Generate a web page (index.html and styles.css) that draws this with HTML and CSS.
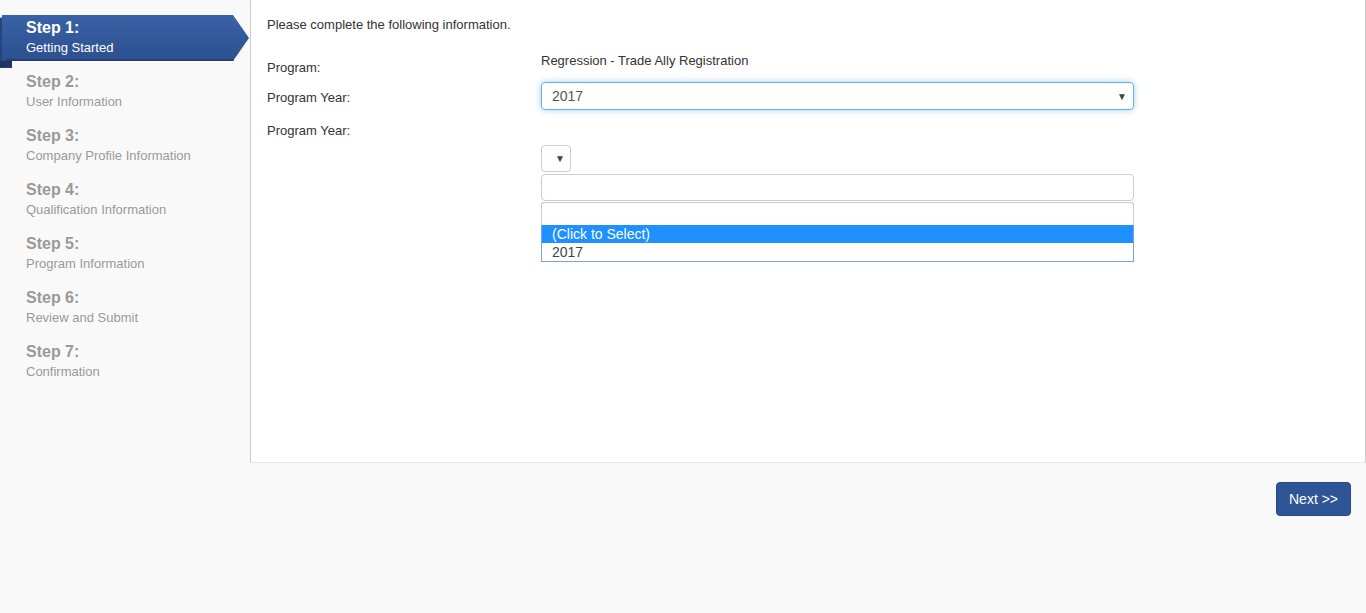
FILE: index.html
```html
<!DOCTYPE html>
<html>
<head>
<meta charset="utf-8">
<link rel="stylesheet" href="styles.css">
</head>
<body>
<div class="wrap">
  <div class="top">
    <aside class="steps">
      <div class="step active">
        <svg class="ribbon" width="250" height="56" viewBox="0 0 250 56">
          <defs>
            <linearGradient id="rg" x1="0" y1="0" x2="0" y2="1">
              <stop offset="0" stop-color="#3a62a6"/>
              <stop offset="1" stop-color="#2c5090"/>
            </linearGradient>
          </defs>
          <path d="M0 3 Q6 0 12 5 L12 53 L0 53 Z" fill="#254580"/>
          <path d="M0 46 L12 46 L12 53 Q6 50 0 53 Z" fill="#1b3566"/>
          <path d="M2 0 L233 0 L249 23 L233 46 L6 46 Q2 46 2 40 Z" fill="url(#rg)"/>
          <path d="M6 44 L233 44 L234 46 L6 46 Z" fill="#243f73"/>
        </svg>
        <div class="step-title">Step 1:</div>
        <div class="step-sub">Getting Started</div>
      </div>
      <div class="step"><div class="step-title">Step 2:</div><div class="step-sub">User Information</div></div>
      <div class="step"><div class="step-title">Step 3:</div><div class="step-sub">Company Profile Information</div></div>
      <div class="step"><div class="step-title">Step 4:</div><div class="step-sub">Qualification Information</div></div>
      <div class="step"><div class="step-title">Step 5:</div><div class="step-sub">Program Information</div></div>
      <div class="step"><div class="step-title">Step 6:</div><div class="step-sub">Review and Submit</div></div>
      <div class="step"><div class="step-title">Step 7:</div><div class="step-sub">Confirmation</div></div>
    </aside>
    <main class="panel">
      <p class="intro">Please complete the following information.</p>
      <div class="form">
        <div class="row r-program">
          <div class="label">Program:</div>
          <div class="value">Regression - Trade Ally Registration</div>
        </div>
        <div class="row r-year">
          <div class="label">Program Year:</div>
          <div class="value">
            <div class="select focus"><span>2017</span><span class="caret">▼</span></div>
          </div>
        </div>
        <div class="row r-year2">
          <div class="label">Program Year:</div>
          <div class="value">
            <div class="mini-select"><span class="caret">▼</span></div>
            <div class="input"></div>
            <div class="dropdown">
              <div class="search"></div>
              <div class="opt hl">(Click to Select)</div>
              <div class="opt">2017</div>
            </div>
          </div>
        </div>
      </div>
    </main>
  </div>
  <div class="footer">
    <button class="next">Next &gt;&gt;</button>
  </div>
</div>
</body>
</html>
```
FILE: styles.css
```css
html, body {
  margin: 0;
  padding: 0;
  background: #f9f9f9;
  font-family: "Liberation Sans", Arial, sans-serif;
  color: #333;
}
.wrap {
  width: 1366px;
  height: 613px;
}
.top {
  display: flex;
  height: 463px;
}
.steps {
  width: 250px;
  flex: none;
  padding-top: 15px;
  box-sizing: border-box;
}
.step {
  position: relative;
  height: 54px;
  padding-left: 26px;
  box-sizing: border-box;
  color: #999;
}
.step-title {
  font-size: 16px;
  font-weight: bold;
  line-height: 20px;
  padding-top: 3px;
  position: relative;
}
.step-sub {
  font-size: 13px;
  line-height: 20px;
  position: relative;
}
.step.active {
  color: #fff;
}
.step.active .step-sub { color: #fff; }
.ribbon {
  position: absolute;
  left: 0;
  top: 0;
}
.panel {
  flex: 1;
  background: #fff;
  border-left: 1px solid #ccc;
  border-right: 1px solid #ccc;
  border-bottom: 1px solid #e6e6e6;
  padding: 0 16px;
}
.intro {
  font-size: 13px;
  margin: 17px 0 0;
  line-height: 16px;
}
.form {
  margin-top: 18px;
}
.row {
  display: flex;
}
.label {
  width: 274px;
  font-size: 13px;
  flex: none;
}
.value {
  width: 593px;
  font-size: 13px;
}
.r-program .label { padding-top: 9px; line-height: 16px; }
.r-program .value { padding-top: 2px; line-height: 16px; }
.r-year { margin-top: 6px; }
.r-year .label { padding-top: 8px; line-height: 16px; }
.select {
  height: 28px;
  box-sizing: border-box;
  border: 1px solid #66afe9;
  border-radius: 4px;
  box-shadow: 0 0 6px rgba(102,175,233,0.6);
  display: flex;
  align-items: center;
  justify-content: space-between;
  padding: 0 6px 0 10px;
  font-size: 14px;
  color: #555;
}
.caret {
  font-size: 10px;
  color: #444;
}
.r-year2 { margin-top: 8px; }
.r-year2 .label { padding-top: 5px; line-height: 16px; }
.mini-select {
  margin-top: 27px;
  width: 30px;
  height: 27px;
  box-sizing: border-box;
  border: 1px solid #ccc;
  border-radius: 4px;
  display: flex;
  align-items: center;
  justify-content: flex-end;
  padding-right: 5px;
}
.input {
  margin-top: 2px;
  height: 27px;
  box-sizing: border-box;
  border: 1px solid #ccc;
  border-radius: 4px;
}
.dropdown {
  margin-top: 1px;
  border: 1px solid #7aa3d8;
  border-top: none;
  border-radius: 4px 4px 0 0;
}
.search {
  height: 23px;
  box-sizing: border-box;
  border: 1px solid #ccc;
  border-bottom: none;
  border-radius: 4px 4px 0 0;
  margin: 0 -1px;
  background: #fff;
}
.opt {
  height: 18px;
  line-height: 18px;
  font-size: 14px;
  color: #444;
  padding-left: 10px;
  background: #fff;
}
.opt.hl {
  background: #1e90ff;
  color: #fff;
}
.footer {
  display: flex;
  justify-content: flex-end;
  padding: 19px 15px 0 0;
}
.next {
  background: #2f5597;
  border: 1px solid #284a85;
  border-radius: 4px;
  color: #fff;
  font-family: "Liberation Sans", Arial, sans-serif;
  font-size: 14px;
  width: 75px;
  height: 34px;
  padding: 0;
}
```
